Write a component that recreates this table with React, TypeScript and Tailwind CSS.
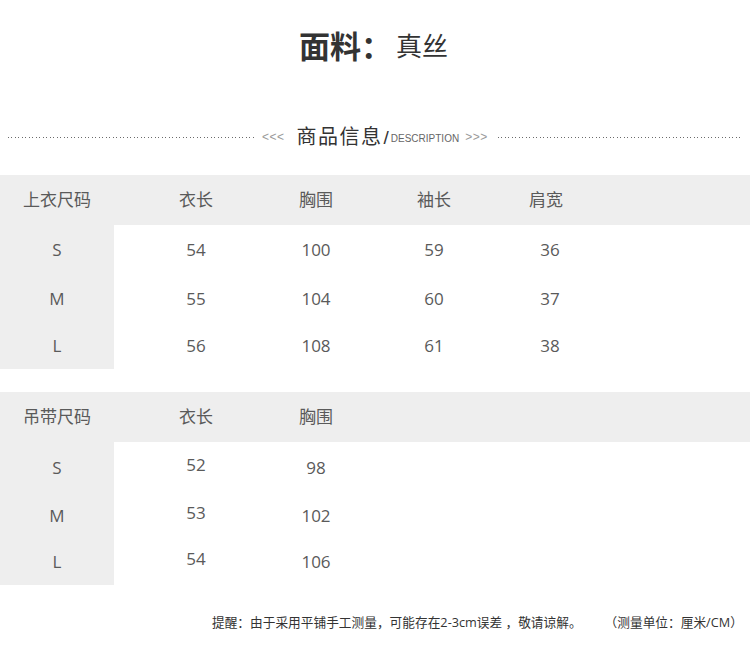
import React from 'react';

const cn = "font-['Open_Sans','Noto_Sans_CJK_SC',sans-serif]";

// column template shared by both tables
const cols = 'grid grid-cols-[114px_164px_76px_160px_64px_1fr]';

type Table = {
  title: string;
  heads: string[];
  rows: string[][];
  rowHeights: string[];
  raiseSecond?: boolean;
};

const tables: Table[] = [
  {
    title: '上衣尺码',
    heads: ['衣长', '胸围', '袖长', '肩宽'],
    rows: [
      ['S', '54', '100', '59', '36'],
      ['M', '55', '104', '60', '37'],
      ['L', '56', '108', '61', '38'],
    ],
    rowHeights: ['h-[50px]', 'h-[48px]', 'h-[46px]'],
  },
  {
    title: '吊带尺码',
    heads: ['衣长', '胸围'],
    rows: [
      ['S', '52', '98'],
      ['M', '53', '102'],
      ['L', '54', '106'],
    ],
    rowHeights: ['h-[51px]', 'h-[46px]', 'h-[46px]'],
    raiseSecond: true,
  },
];

function Dots({ className }: { className: string }) {
  return (
    <div
      className={`h-px bg-[repeating-linear-gradient(to_right,#6b6b6b_0_1px,transparent_1px_3.5px)] ${className}`}
    />
  );
}

function SizeTable({ t }: { t: Table }) {
  return (
    <div className="text-[17px] text-[#5a5a5a]">
      <div className={`${cols} h-[50px] items-center bg-[#eeeeee]`}>
        <div className="text-center">{t.title}</div>
        {t.heads.map((h, i) => (
          <div key={i} className="text-center">
            {h}
          </div>
        ))}
      </div>
      {t.rows.map((r, ri) => (
        <div key={ri} className={`${cols} ${t.rowHeights[ri]}`}>
          <div className="flex items-center justify-center bg-[#eeeeee]">{r[0]}</div>
          {r.slice(1).map((v, i) => (
            <div
              key={i}
              className={`flex items-center justify-center ${
                t.raiseSecond && i === 0 ? '-translate-y-[3px]' : ''
              } ${i === 3 ? 'translate-x-[4px]' : ''}`}
            >
              {v}
            </div>
          ))}
        </div>
      ))}
    </div>
  );
}

export default function App() {
  return (
    <div className={`w-[750px] h-[656px] bg-white overflow-hidden ${cn}`}>
      <div className="h-[92px] flex items-center justify-center text-[#333] pr-[3px]">
        <span className="text-[31px] font-bold">面料：</span>
        <span className="text-[26px] ml-[4px]">真丝</span>
      </div>

      <div className="mt-[35px] h-[20px] flex items-center text-[#444]">
        <Dots className="ml-[8px] w-[247px]" />
        <span className="ml-[7px] text-[12px] text-[#999] tracking-[0.5px] font-['Liberation_Sans',sans-serif]">
          &lt;&lt;&lt;
        </span>
        <span className="ml-[12px] text-[20px] tracking-[1.5px] text-[#333] leading-none">
          商品信息
        </span>
        <span className="text-[19px] text-[#333] leading-none ml-[1px] font-['Liberation_Sans',sans-serif]">
          /
        </span>
        <span className="ml-[2px] text-[10px] text-[#666] font-['Liberation_Sans',sans-serif] mt-[3px]">
          DESCRIPTION
        </span>
        <span className="ml-[6px] text-[12px] text-[#999] tracking-[0.5px] font-['Liberation_Sans',sans-serif]">
          &gt;&gt;&gt;
        </span>
        <Dots className="ml-[10px] w-[244px]" />
      </div>

      <div className="mt-[28px]">
        <SizeTable t={tables[0]} />
      </div>
      <div className="mt-[23px]">
        <SizeTable t={tables[1]} />
      </div>

      <div className="mt-[28px] flex text-[12.7px] text-[#333] leading-[18px]">
        <span className="ml-[212px]">提醒：由于采用平铺手工测量，可能存在2-3cm误差 ，敬请谅解。</span>
        <span className="ml-[23px]">（测量单位：厘米/CM）</span>
      </div>
    </div>
  );
}
